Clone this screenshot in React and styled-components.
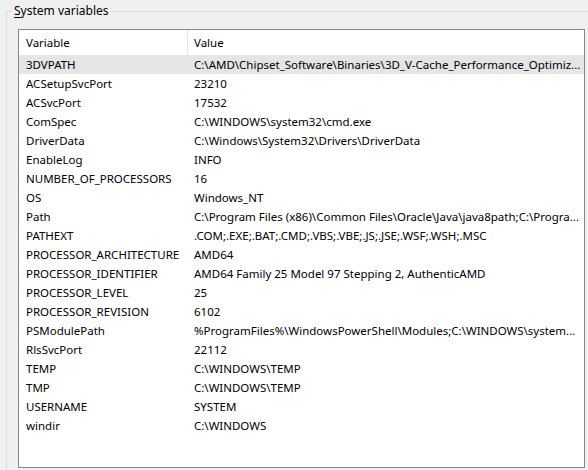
import React from "react";
import styled, { createGlobalStyle } from "styled-components";

const GlobalStyle = createGlobalStyle`
  html, body {
    margin: 0;
    padding: 0;
    background: #f0f0f0;
    overflow: hidden;
  }
  body {
    font-family: "Noto Sans", "Open Sans", sans-serif;
    font-size: 11.5px;
    color: #000;
  }
`;

const Page = styled.div`
  width: 588px;
  height: 470px;
  overflow: hidden;
`;

const GroupBox = styled.fieldset`
  margin: 3px 0 0 6px;
  padding: 10px 0 0 11px;
  border: 1px solid #dcdcdc;
  width: 640px;
  height: 520px;
  box-sizing: border-box;
`;

const Legend = styled.legend`
  margin-left: -6px;
  padding: 0 2px;
  line-height: 16px;
  font-size: 12px;
  color: #000;
  u {
    text-decoration: underline;
    text-underline-offset: 2px;
  }
`;

const ListBox = styled.div`
  width: 567px;
  height: 439px;
  box-sizing: border-box;
  border: 1px solid #828790;
  background: #fff;
  overflow: hidden;
`;

const HeaderRow = styled.div`
  display: grid;
  grid-template-columns: 169px 1fr;
  height: 25px;
`;

const HeaderCell = styled.div`
  display: flex;
  align-items: center;
  padding-left: ${(p) => p.$pad}px;
  border-right: ${(p) => (p.$divider ? "1px solid #e5e5e5" : "none")};
  white-space: nowrap;
`;

const Row = styled.div`
  display: grid;
  grid-template-columns: 169px 1fr;
  height: 19px;
  background: ${(p) => (p.$selected ? "#e5e5e5" : "transparent")};
`;

const Cell = styled.div`
  display: flex;
  align-items: center;
  padding-left: ${(p) => p.$pad}px;
  white-space: nowrap;
  overflow: hidden;
`;

const vars = [
  ["3DVPATH", "C:\\AMD\\Chipset_Software\\Binaries\\3D_V-Cache_Performance_Optimiz..."],
  ["ACSetupSvcPort", "23210"],
  ["ACSvcPort", "17532"],
  ["ComSpec", "C:\\WINDOWS\\system32\\cmd.exe"],
  ["DriverData", "C:\\Windows\\System32\\Drivers\\DriverData"],
  ["EnableLog", "INFO"],
  ["NUMBER_OF_PROCESSORS", "16"],
  ["OS", "Windows_NT"],
  ["Path", "C:\\Program Files (x86)\\Common Files\\Oracle\\Java\\java8path;C:\\Progra..."],
  ["PATHEXT", ".COM;.EXE;.BAT;.CMD;.VBS;.VBE;.JS;.JSE;.WSF;.WSH;.MSC"],
  ["PROCESSOR_ARCHITECTURE", "AMD64"],
  ["PROCESSOR_IDENTIFIER", "AMD64 Family 25 Model 97 Stepping 2, AuthenticAMD"],
  ["PROCESSOR_LEVEL", "25"],
  ["PROCESSOR_REVISION", "6102"],
  ["PSModulePath", "%ProgramFiles%\\WindowsPowerShell\\Modules;C:\\WINDOWS\\system..."],
  ["RlsSvcPort", "22112"],
  ["TEMP", "C:\\WINDOWS\\TEMP"],
  ["TMP", "C:\\WINDOWS\\TEMP"],
  ["USERNAME", "SYSTEM"],
  ["windir", "C:\\WINDOWS"],
];

export default function App() {
  return (
    <Page>
      <GlobalStyle />
      <GroupBox>
        <Legend>
          <u>S</u>ystem variables
        </Legend>
        <ListBox>
          <HeaderRow>
            <HeaderCell $pad={7} $divider>
              Variable
            </HeaderCell>
            <HeaderCell $pad={6}>Value</HeaderCell>
          </HeaderRow>
          {vars.map(([name, value], i) => (
            <Row key={name} $selected={i === 0}>
              <Cell $pad={7}>{name}</Cell>
              <Cell $pad={6}>{value}</Cell>
            </Row>
          ))}
        </ListBox>
      </GroupBox>
    </Page>
  );
}
